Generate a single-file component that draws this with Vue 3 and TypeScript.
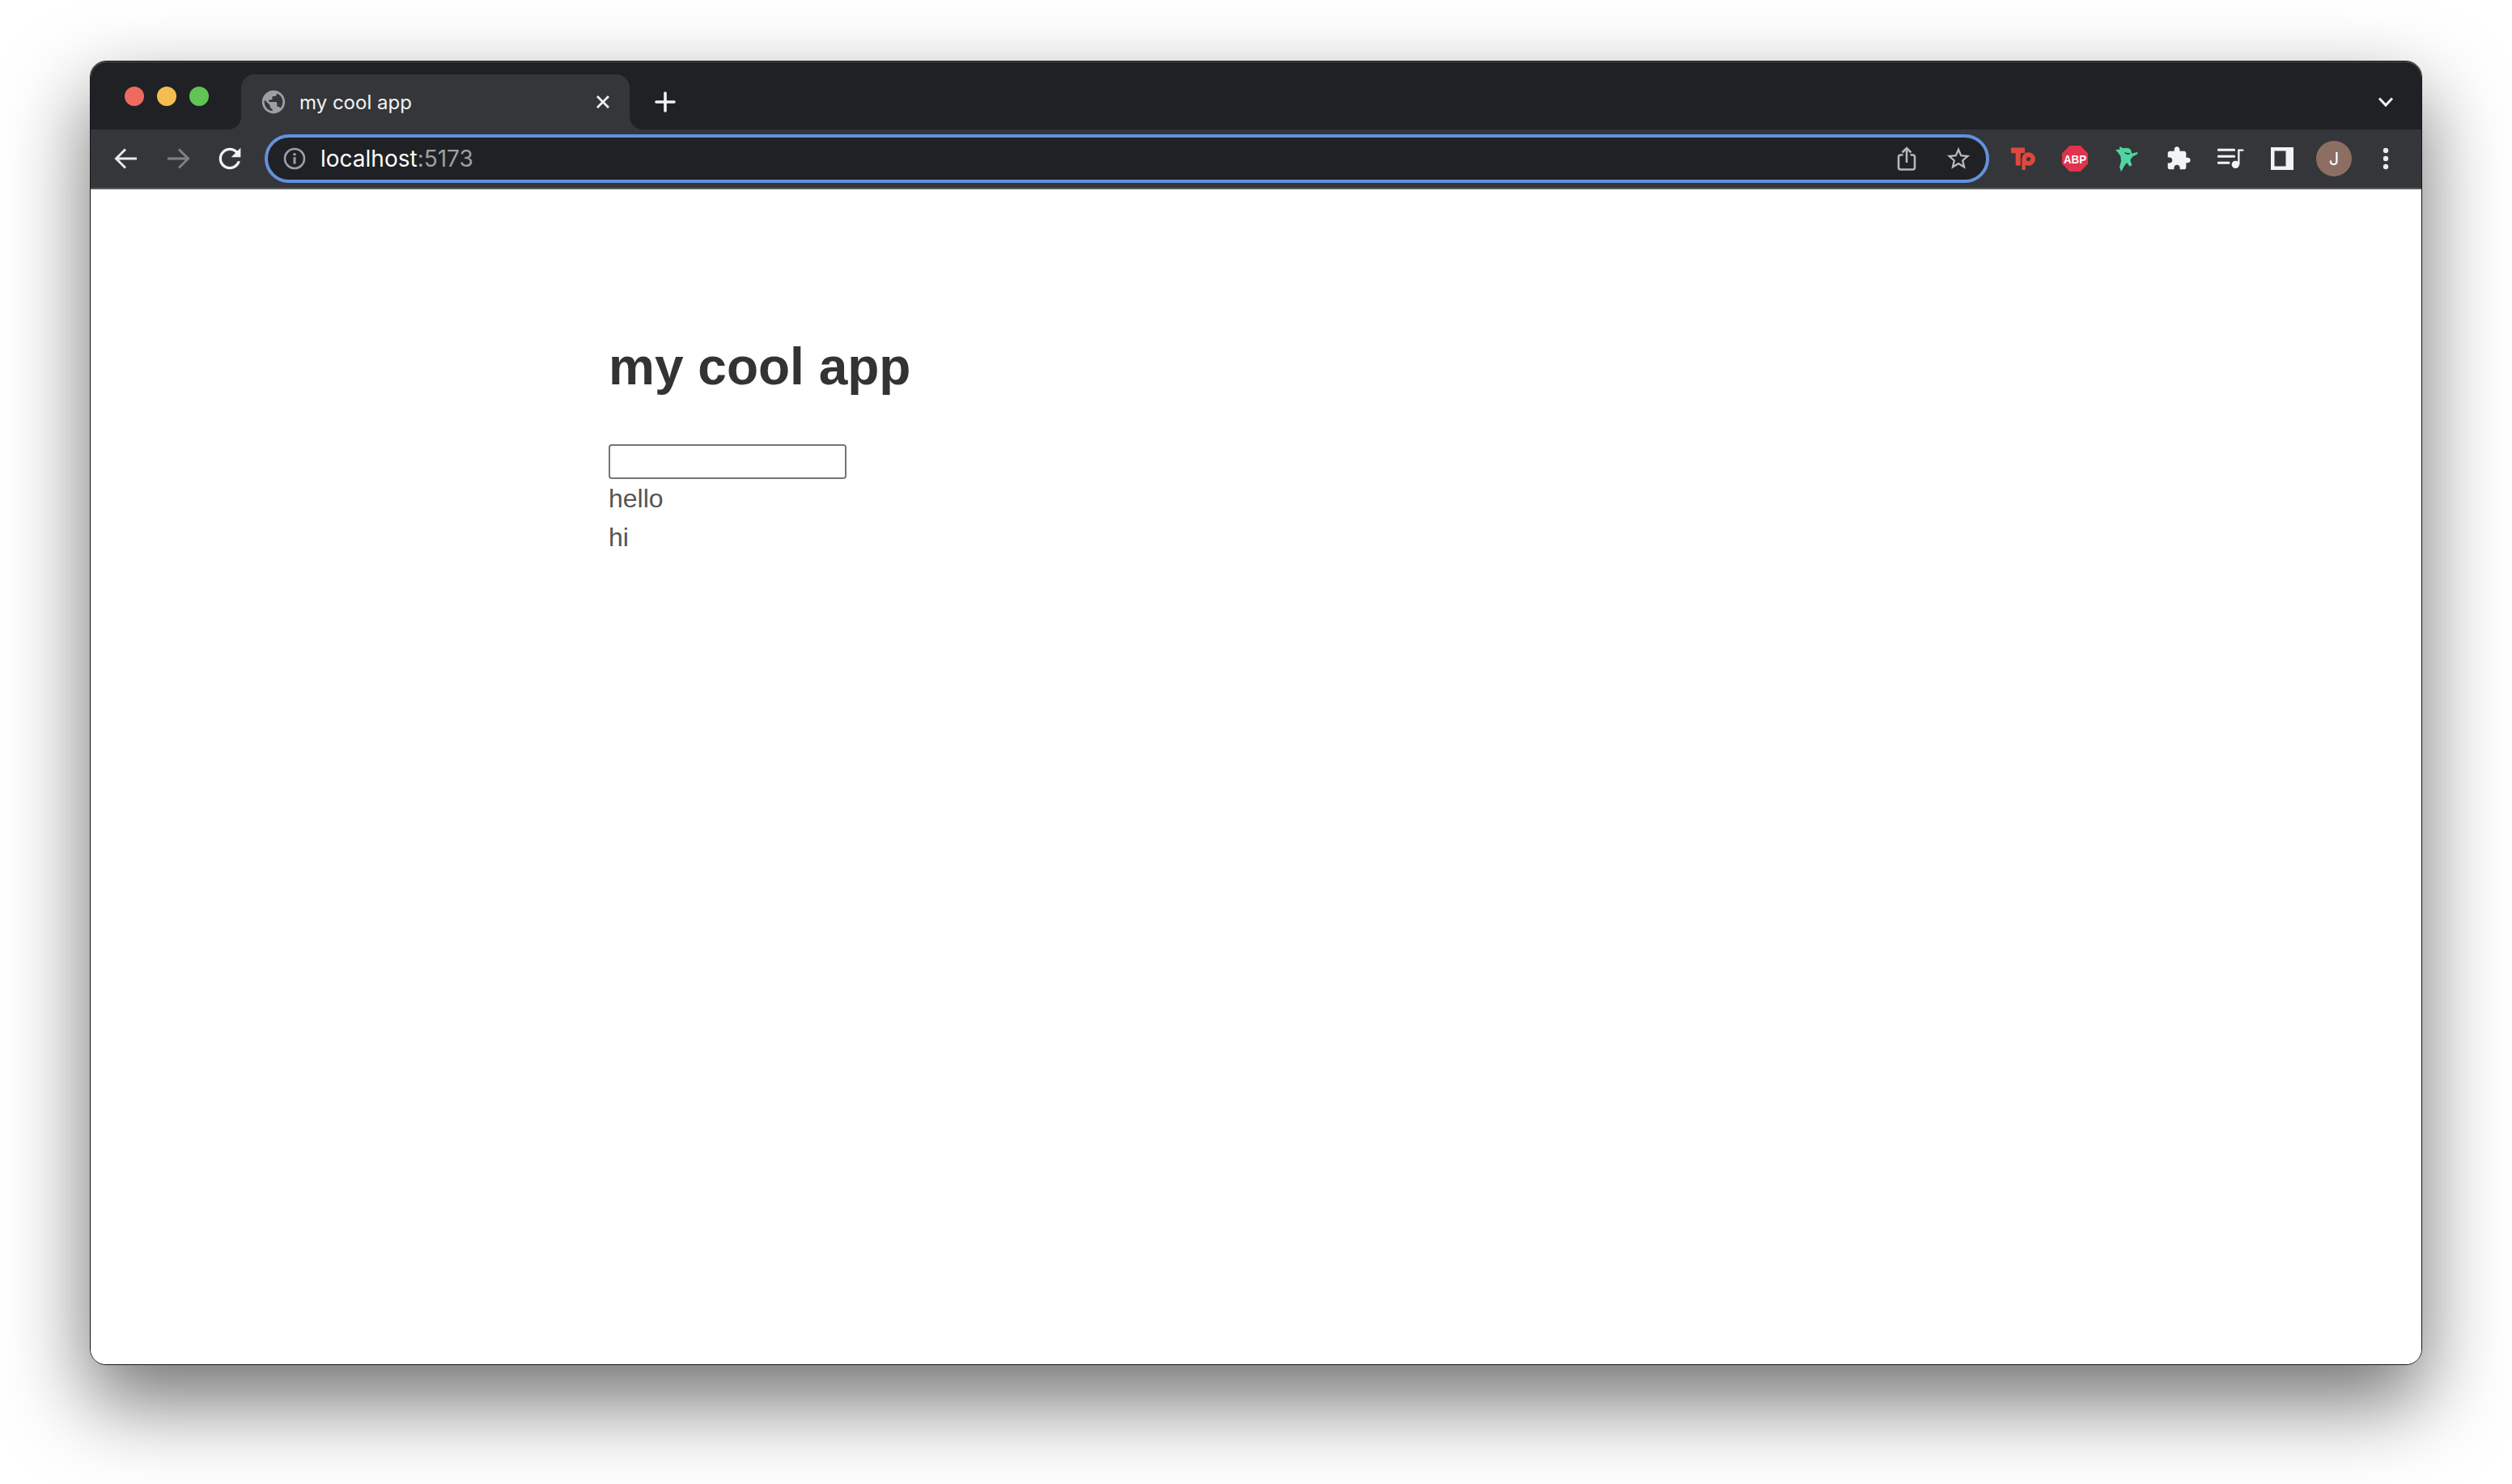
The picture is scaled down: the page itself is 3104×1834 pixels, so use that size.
<template>
  <div class="desktop">
    <div class="window">
      <div class="tabstrip">
        <div class="lights">
          <span class="light red" />
          <span class="light yellow" />
          <span class="light green" />
        </div>
        <div class="tab">
          <svg class="favicon" width="34" height="34" viewBox="0 0 24 24">
            <path fill="#9aa0a6" d="M12 2C6.48 2 2 6.48 2 12s4.48 10 10 10 10-4.48 10-10S17.52 2 12 2zm-1 17.93c-3.95-.49-7-3.85-7-7.93 0-.62.08-1.21.21-1.79L9 15v1c0 1.1.9 2 2 2v1.93zm6.9-2.54c-.26-.81-1-1.39-1.9-1.39h-1v-3c0-.55-.45-1-1-1H8v-2h2c.55 0 1-.45 1-1V7h2c1.1 0 2-.9 2-2v-.41c2.93 1.19 5 4.06 5 7.41 0 2.08-.8 3.97-2.1 5.39z" />
          </svg>
          <span class="tab-title">{{ title }}</span>
          <svg class="tab-close" width="18" height="18" viewBox="0 0 18 18">
            <path d="M2 2l14 14M16 2 2 16" stroke="#f1f3f4" stroke-width="2.8" fill="none" />
          </svg>
        </div>
        <svg class="new-tab" width="32" height="32" viewBox="0 0 32 32">
          <path d="M16 5v22M5 16h22" stroke="#f1f3f4" stroke-width="3.6" stroke-linecap="round" fill="none" />
        </svg>
        <svg class="tab-search" width="32" height="32" viewBox="0 0 32 32">
          <path d="M8 11.5l8 8.5 8-8.5" stroke="#f1f3f4" stroke-width="3" fill="none" />
        </svg>
      </div>

      <div class="toolbar">
        <span class="btn">
          <svg width="32" height="32" viewBox="0 0 32 32">
            <path d="M29 16H4M15 4.5 3.5 16 15 27.5" stroke="#e8eaed" stroke-width="3" fill="none" />
          </svg>
        </span>
        <span class="btn">
          <svg width="32" height="32" viewBox="0 0 32 32">
            <path d="M3 16h25M17 4.5 28.5 16 17 27.5" stroke="#808184" stroke-width="3" fill="none" />
          </svg>
        </span>
        <span class="btn">
          <svg width="40" height="40" viewBox="0 0 24 24">
            <path fill="#f1f3f4" d="M17.65 6.35C16.2 4.9 14.21 4 12 4c-4.42 0-7.99 3.58-7.99 8s3.57 8 7.99 8c3.73 0 6.84-2.55 7.73-6h-2.08c-.82 2.33-3.04 4-5.65 4-3.31 0-6-2.69-6-6s2.69-6 6-6c1.66 0 3.14.69 4.22 1.78L13 11h7V4l-2.35 2.35z" />
          </svg>
        </span>

        <div class="omnibox">
          <svg class="info" width="28" height="28" viewBox="0 0 28 28">
            <circle cx="14" cy="14" r="12" stroke="#9aa0a6" stroke-width="2.6" fill="none" />
            <circle cx="14" cy="8.8" r="1.8" fill="#9aa0a6" />
            <rect x="12.5" y="12.2" width="3" height="8.4" fill="#9aa0a6" />
          </svg>
          <span class="url">localhost<span class="port">:5173</span></span>
          <span class="omni-btn">
            <svg width="24" height="32" viewBox="0 0 24 32">
              <path d="M7.5 11.5H4.5a2.5 2.5 0 0 0-2.5 2.5v13a2.5 2.5 0 0 0 2.5 2.5h15a2.5 2.5 0 0 0 2.5-2.5V14a2.5 2.5 0 0 0-2.5-2.5h-3M12 21V3.5M6.5 8.5 12 3l5.5 5.5" stroke="#b6b7b9" stroke-width="2.6" fill="none" />
            </svg>
          </span>
          <span class="omni-btn">
            <svg width="34" height="34" viewBox="0 0 24 24">
              <path fill="#b9babc" d="M22 9.24l-7.19-.62L12 2 9.19 8.63 2 9.24l5.46 4.73L5.82 21 12 17.27 18.18 21l-1.63-7.03L22 9.24zM12 15.4l-3.76 2.27 1-4.28-3.32-2.88 4.38-.38L12 6.1l1.71 4.04 4.38.38-3.32 2.88 1 4.28L12 15.4z" />
            </svg>
          </span>
        </div>

        <span class="btn">
          <svg width="40" height="40" viewBox="0 0 40 40">
            <path fill="#e0483d" d="M5 6.5h17v6.7h-5.3v15.2h-6V13.2H5z" />
            <path fill="#e0483d" fill-rule="evenodd" d="M18.4 20.5a8.2 8.2 0 1 1 4.4 7.3V34h-4.4zM26.6 18a2.6 2.6 0 1 0 0 5.2 2.6 2.6 0 0 0 0-5.2z" />
          </svg>
        </span>
        <span class="btn">
          <svg class="abp-icon" width="34" height="34" viewBox="0 0 34 34">
            <path fill="#e1334d" d="M10.4 1h13.2L33 10.4v13.2L23.6 33H10.4L1 23.6V10.4z" />
            <text class="abp" x="17" y="22.5" text-anchor="middle" textLength="28" lengthAdjust="spacingAndGlyphs">ABP</text>
          </svg>
        </span>
        <span class="btn">
          <svg width="34" height="35" viewBox="395 40 100 105">
            <path fill="#4fd6a0" d="M403 58 418 57 419 46 432 53Q450 48 460 58L464 72 484 67 486 73 466 84 458 96 464 116 456 120 445 106 436 118 424 140 418 122 424 100 422 82 412 68Z" />
            <path fill="#35363a" d="M437 67l10 4 10-2-2 6-7 1-10-4z" />
          </svg>
        </span>
        <span class="btn">
          <svg width="32" height="32" viewBox="0 0 24 24">
            <path fill="#f1f3f4" d="M20.5 11H19V7c0-1.1-.9-2-2-2h-4V3.5C13 2.12 11.88 1 10.5 1S8 2.12 8 3.5V5H4c-1.1 0-1.99.9-1.99 2v3.8H3.5c1.49 0 2.7 1.21 2.7 2.7s-1.21 2.7-2.7 2.7H2V20c0 1.1.9 2 2 2h3.8v-1.5c0-1.49 1.21-2.7 2.7-2.7 1.49 0 2.7 1.21 2.7 2.7V22H17c1.1 0 2-.9 2-2v-4h1.5c1.38 0 2.5-1.12 2.5-2.5S21.88 11 20.5 11z" />
          </svg>
        </span>
        <span class="btn">
          <svg width="35" height="29" viewBox="115 50 105 87">
            <path d="M122 60h58M122 84h58M122 108h38" stroke="#f1f3f4" stroke-width="9" stroke-linecap="round" fill="none" />
            <circle cx="185" cy="114" r="14" fill="#f1f3f4" />
            <path d="M197 114V61h18" stroke="#f1f3f4" stroke-width="7" fill="none" />
          </svg>
        </span>
        <span class="btn">
          <svg width="28" height="28" viewBox="0 0 28 28">
            <path fill="#f1f3f4" fill-rule="evenodd" d="M0 0h28v28H0zM4.5 4.5v19h14v-19z" />
          </svg>
        </span>
        <span class="btn">
          <span class="avatar">J</span>
        </span>
        <span class="btn">
          <svg width="8" height="30" viewBox="0 0 8 30">
            <circle cx="4" cy="5" r="3.2" fill="#e8eaed" />
            <circle cx="4" cy="15" r="3.2" fill="#e8eaed" />
            <circle cx="4" cy="25" r="3.2" fill="#e8eaed" />
          </svg>
        </span>
      </div>

      <div class="page">
        <h1 class="heading">{{ title }}</h1>
        <input v-model="draft" class="field" type="text" />
        <div v-for="item in items" :key="item" class="item">{{ item }}</div>
      </div>
    </div>
  </div>
</template>

<script setup lang="ts">
import { ref } from 'vue'

const title = 'my cool app'
const draft = ref('')
const items = ref<string[]>(['hello', 'hi'])
</script>

<style>
html,
body {
  margin: 0;
  background: #fff;
}
</style>

<style scoped>
.desktop {
  box-sizing: border-box;
  width: 3104px;
  height: 1834px;
  padding: 75px 111px 147px 111px;
  overflow: hidden;
  background: #fff;
}

.window {
  position: relative;
  display: flex;
  flex-direction: column;
  box-sizing: border-box;
  height: 100%;
  border: 1px solid #16171a;
  border-radius: 20px;
  overflow: hidden;
  background: #fff;
  box-shadow: 0 44px 100px 2px rgba(0, 0, 0, 0.55);
}

/* thin light rim along the top corners */
.window::after {
  content: '';
  position: absolute;
  top: 0;
  left: 0;
  right: 0;
  height: 40px;
  border-radius: 19px 19px 0 0;
  box-shadow: inset 0 1px 1px rgba(255, 255, 255, 0.22);
  pointer-events: none;
}

.tabstrip {
  display: flex;
  align-items: flex-start;
  flex: none;
  box-sizing: border-box;
  height: 84px;
  padding-top: 16px;
  background: #202124;
}

.lights {
  display: flex;
  gap: 16px;
  box-sizing: border-box;
  width: 186px;
  padding: 15px 0 0 42px;
}

.light {
  width: 24px;
  height: 24px;
  border-radius: 50%;
}
.red { background: #ee6a5f; }
.yellow { background: #f5bd4f; }
.green { background: #61c454; }

.tab {
  position: relative;
  display: flex;
  align-items: center;
  box-sizing: border-box;
  width: 480px;
  height: 68px;
  padding: 0 24px 0 23px;
  border-radius: 16px 16px 0 0;
  background: #35363a;
}

.tab::before,
.tab::after {
  content: '';
  position: absolute;
  bottom: 0;
  width: 16px;
  height: 16px;
}
.tab::before {
  left: -16px;
  background: radial-gradient(circle at 0 0, #202124 15.5px, #35363a 16.5px);
}
.tab::after {
  right: -16px;
  background: radial-gradient(circle at 100% 0, #202124 15.5px, #35363a 16.5px);
}

.favicon {
  flex: none;
}

.tab-title {
  flex: 1;
  margin-left: 15px;
  color: #f1f3f4;
  font: 24px Inter, "Liberation Sans", sans-serif;
}

.tab-close {
  flex: none;
}

.new-tab {
  flex: none;
  margin: 18px 0 0 28px;
}

.tab-search {
  flex: none;
  margin: 18px 28px 0 auto;
}

.toolbar {
  display: flex;
  align-items: center;
  flex: none;
  box-sizing: border-box;
  height: 72px;
  padding: 0 12px;
  background: #35363a;
}

.btn {
  display: flex;
  align-items: center;
  justify-content: center;
  flex: none;
  width: 64px;
  height: 64px;
}

.omnibox {
  display: flex;
  align-items: center;
  flex: 1;
  box-sizing: border-box;
  height: 60px;
  margin: 0 10px 0 11px;
  padding: 0 2px 0 19px;
  border: 4px solid #6391de;
  border-radius: 30px;
  background: #202124;
}

.info {
  flex: none;
}

.url {
  flex: 1;
  margin-left: 18px;
  color: #fff;
  font: 28px Inter, "Liberation Sans", sans-serif;
}

.port {
  color: #9aa0a6;
}

.omni-btn {
  display: flex;
  align-items: center;
  justify-content: center;
  flex: none;
  width: 64px;
  height: 48px;
}

.abp-icon {
  overflow: visible;
}

.abp {
  fill: #fff;
  font: bold 15px "Liberation Sans", sans-serif;
}

.avatar {
  display: flex;
  align-items: center;
  justify-content: center;
  width: 44px;
  height: 44px;
  border-radius: 50%;
  background: #8d6e63;
  color: #fff;
  font: 22px Inter, "Liberation Sans", sans-serif;
}

.page {
  flex: 1;
  padding: 181px 0 0 640px;
  border-top: 2px solid #5a5b5e;
  background: #fff;
  font: 32px/48px "Liberation Sans", Arial, sans-serif;
  color: #555;
}

.heading {
  margin: 0 0 58px;
  color: #333;
  font-size: 64px;
  font-weight: 700;
  line-height: 76px;
}

.field {
  display: block;
  box-sizing: border-box;
  width: 294px;
  height: 43px;
  padding: 0 4px;
  border: 2px solid #767676;
  border-radius: 4px;
  background: #fff;
}

.item {
  height: 48px;
}
</style>
